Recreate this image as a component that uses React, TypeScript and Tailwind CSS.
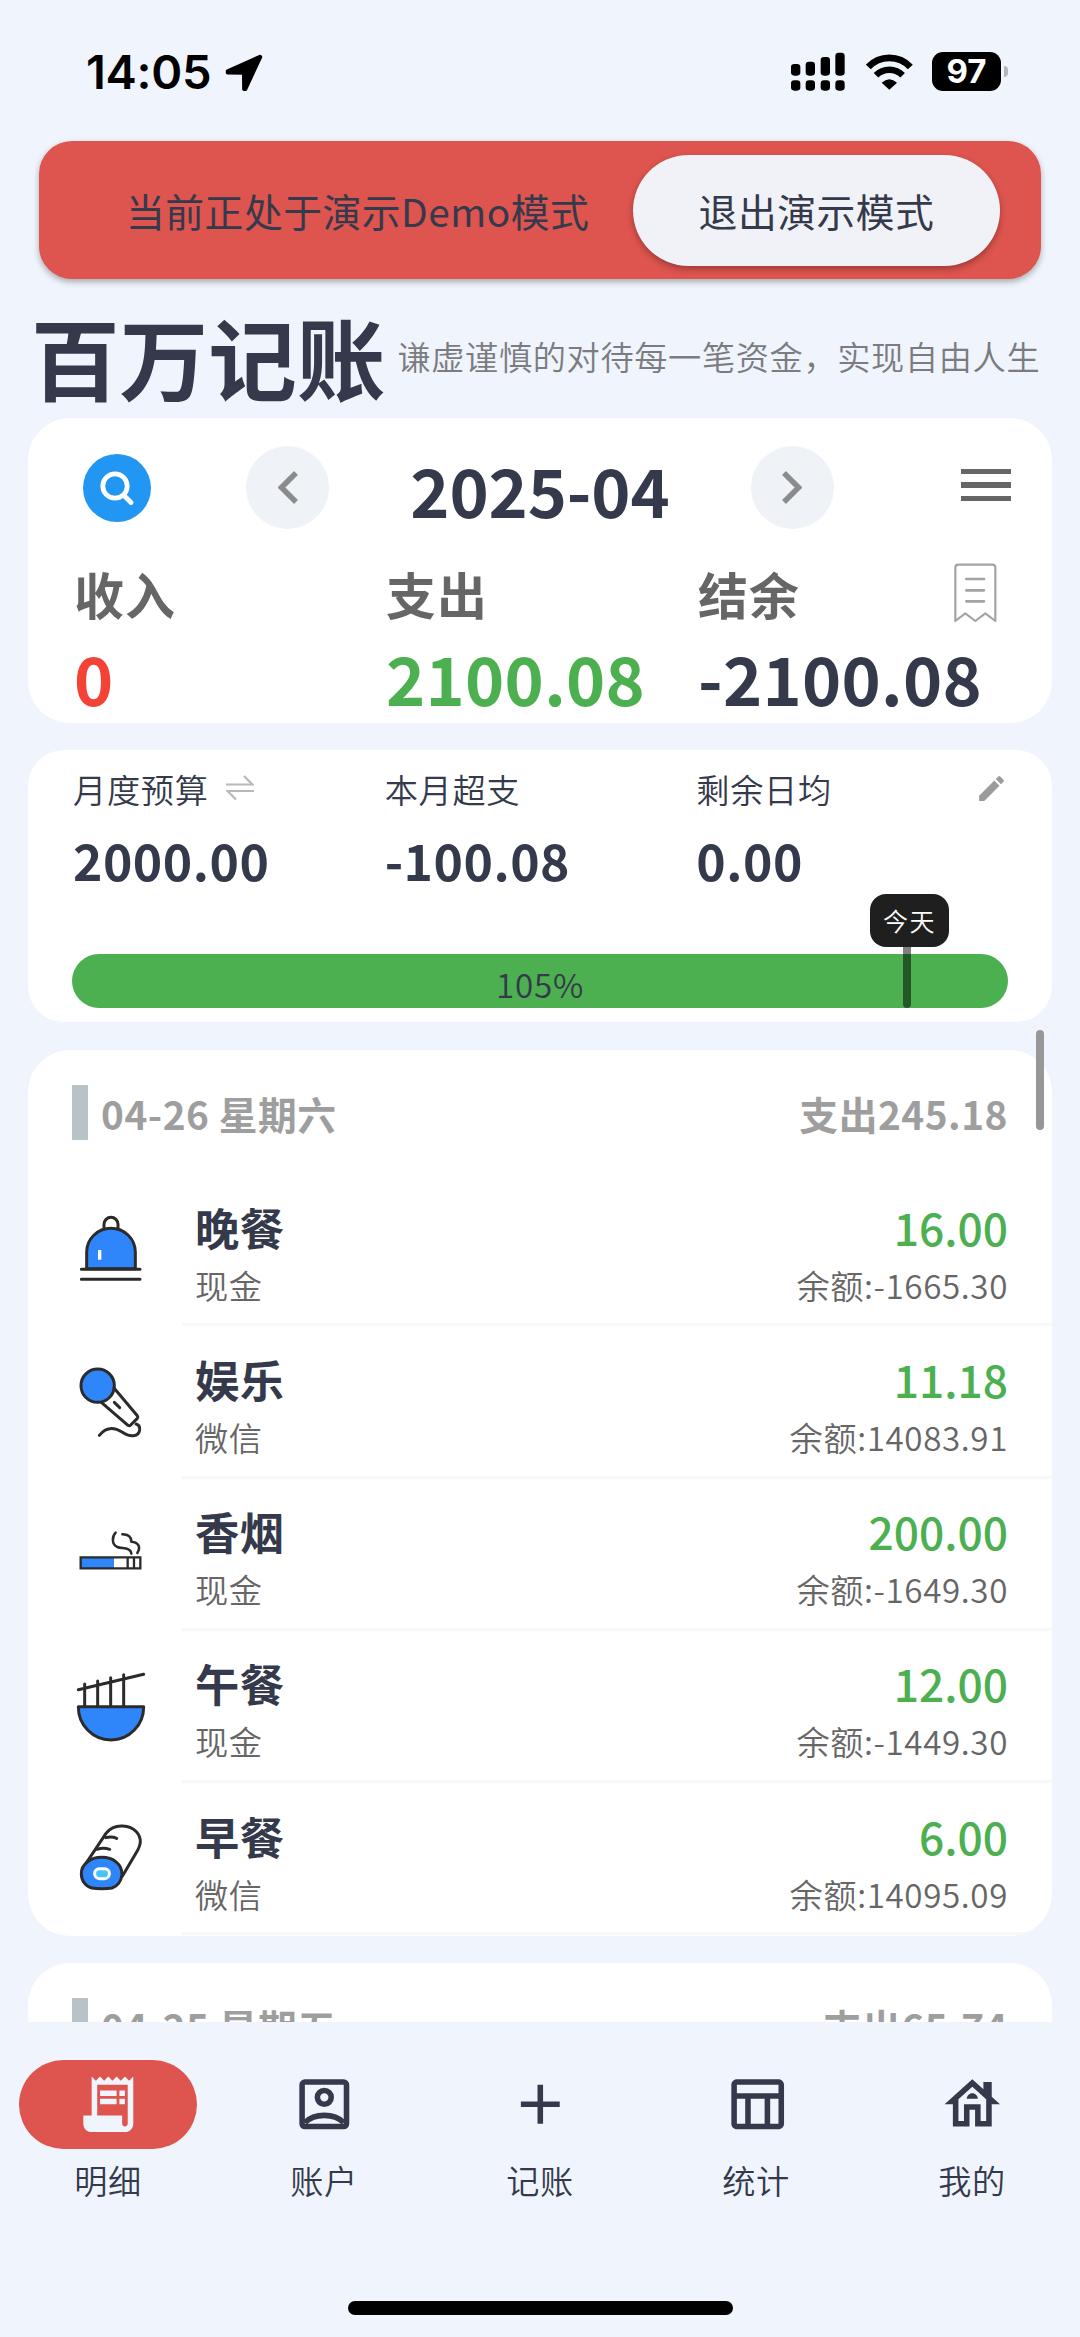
import React, { FC, ReactNode } from "react";
import clsx from "clsx";

interface RecordProps {
  title: string;
  account: string;
  amount: string;
  balance: string;
  icon: ReactNode;
}

interface DayHeaderProps {
  date: string;
  total: string;
}

interface NavItemProps {
  label: string;
  icon: ReactNode;
  active?: boolean;
}

const INK = "#2b2b2b";
const BLUE = "#2f86fb";

const LineIcon: FC<{ children: ReactNode }> = ({ children }) => (
  <svg
    className="size-[76px]"
    viewBox="0 0 228 228"
    fill="none"
    stroke={INK}
    strokeWidth="9"
    strokeLinecap="round"
    strokeLinejoin="round"
  >
    {children}
  </svg>
);

const DinnerIcon = () => (
  <LineIcon>
    <path d="M96 50V37a21 21 0 0 1 42 0v13" />
    <path d="M44 170v-50a73 71 0 0 1 146 0v50z" fill={BLUE} />
    <path d="M28 172h176M28 202h176" />
    <path d="M83 114v29" stroke="#fff" strokeWidth="10" strokeLinecap="butt" />
  </LineIcon>
);

const MicIcon = () => (
  <LineIcon>
    <circle cx="77" cy="65" r="50" fill={BLUE} />
    <path d="M126 72l70 83q3 4 0 8l-20 20q-4 4-8 1L88 115" />
    <path d="M127 115l16 16" />
    <path d="M82 214c18-22 40-28 68-10 26 18 50 14 53-6 1-10-3-16-11-18" />
  </LineIcon>
);

const SmokeIcon = () => (
  <LineIcon>
    <path d="M26 121h100v33H26z" fill={BLUE} stroke="none" />
    <path d="M26 121h179v33H26zM167 121v33M186 121v33" strokeWidth="7" strokeLinejoin="miter" />
    <path d="M131 47c-11 11-13 35 5 43 14 6 40 0 42 20" strokeWidth="7.500" />
    <path d="M151 52c19 0 27 8 27 22 22 2 29 16 18 34" strokeWidth="7.500" />
  </LineIcon>
);

const NoodleIcon = () => (
  <LineIcon>
    <path d="M19 62L215 16M38 45v68M77 36v77M116 26v87M155 17v96" />
    <path d="M19 113h196c0 54-42 100-98 100S19 167 19 113z" fill={BLUE} />
  </LineIcon>
);

const RollIcon = () => (
  <LineIcon>
    <path d="M44 124l58-87c14-18 34-23 50-22 38 2 54 27 53 49-1 10-4 16-8 24l-46 78" />
    <path
      d="M89 109c36 0 61 21 61 51-2 20-14 36-30 41-14 3-46 3-60 0-18-3-32-21-32-43 0-28 27-49 61-49z"
      fill={BLUE}
    />
    <path d="M101 50c11-3 22-3 33 2M75 85c12-4 26-4 38 0" />
    <rect x="68" y="143" width="44" height="30" rx="14" fill="#45c5f5" stroke="#fff" />
  </LineIcon>
);

const records: RecordProps[] = [
  { title: "晚餐", account: "现金", amount: "16.00", balance: "-1665.30", icon: <DinnerIcon /> },
  { title: "娱乐", account: "微信", amount: "11.18", balance: "14083.91", icon: <MicIcon /> },
  { title: "香烟", account: "现金", amount: "200.00", balance: "-1649.30", icon: <SmokeIcon /> },
  { title: "午餐", account: "现金", amount: "12.00", balance: "-1449.30", icon: <NoodleIcon /> },
  { title: "早餐", account: "微信", amount: "6.00", balance: "14095.09", icon: <RollIcon /> },
];

const StatusBar = () => (
  <div className="flex h-[141px] items-center pr-[72px] pl-[86px]">
    <span className="pt-[3px] font-[Inter] text-[47px] font-semibold tracking-[-0.3px] text-black">
      14:05
    </span>
    <svg className="mt-[3px] ml-[14px] h-[37px] w-[38px]" viewBox="0 0 38 37">
      <path
        d="M35 2.500L2.500 17.200v1.600l16.200.2.2 16.200h1.600L35.500 3z"
        stroke="#000"
        strokeWidth="3.500"
        strokeLinejoin="round"
      />
    </svg>
    <svg className="mt-[2px] ml-auto h-[39px] w-[54px]" viewBox="0 0 162 117">
      <rect x="0" y="36" width="28" height="35" rx="10" />
      <rect x="44" y="29" width="28" height="42" rx="10" />
      <rect x="89" y="15" width="28" height="56" rx="10" />
      <rect x="133" y="2" width="28" height="69" rx="10" />
      <rect x="0" y="85" width="28" height="31" rx="10" />
      <rect x="44" y="85" width="28" height="31" rx="10" />
      <rect x="89" y="85" width="28" height="31" rx="10" />
      <rect x="133" y="85" width="28" height="31" rx="10" />
    </svg>
    <svg className="mt-[2px] ml-[21px] h-[36px] w-[47px]" viewBox="0 0 141 108" fill="none">
      <path d="M7 39a86 86 0 0 1 126 0" stroke="#000" strokeWidth="20" />
      <path d="M30 64a56 56 0 0 1 80 0" stroke="#000" strokeWidth="19" />
      <path d="M47 86q23-21 46 0l-23 21z" fill="#000" />
    </svg>
    <div className="mt-[2px] ml-[19px] flex h-[39px] w-[69px] items-center justify-center rounded-[11px] bg-black font-[Inter] text-[33px] font-bold text-white">
      97
    </div>
    <div className="mt-[2px] ml-[3px] h-[11px] w-[4px] rounded-r-full bg-[#b4b6ba]" />
  </div>
);

const DemoBanner = () => (
  <div className="mx-[39px] flex h-[138px] items-center rounded-[33px] bg-[#de544e] pr-[41px] pl-[87px] text-[38.800px] shadow-[0_3px_6px_rgba(0,0,0,0.3)]">
    <span className="tracking-[0.500px]">当前正处于演示Demo模式</span>
    <button className="ml-auto h-[111px] w-[367px] rounded-full bg-[#f0f2f7] tracking-[0.500px] shadow-[0_3px_6px_rgba(0,0,0,0.3)]">
      退出演示模式
    </button>
  </div>
);

const Chevron: FC<{ flip?: boolean }> = ({ flip }) => (
  <button className="flex size-[83px] items-center justify-center rounded-full bg-[#eff3f8]">
    <svg
      className={clsx("h-[33px] w-[20px]", flip && "rotate-180")}
      viewBox="0 0 20 33"
      fill="none"
      stroke="#8a8b8d"
      strokeWidth="5.500"
    >
      <path d="M18 2L3.500 16.500 18 31" />
    </svg>
  </button>
);

const MonthCard = () => (
  <section className="h-[305px] rounded-[42px] bg-white pt-[28px] pr-[42px] pl-[46px]">
    <div className="flex h-[83px] items-center pl-[9px]">
      <button className="flex size-[68px] items-center justify-center rounded-full bg-[#2196f3]">
        <svg
          className="size-[34px]"
          viewBox="0 0 34 34"
          fill="none"
          stroke="#fff"
          strokeWidth="4.800"
          strokeLinecap="round"
        >
          <circle cx="15" cy="15" r="12.200" />
          <path d="M24 24.500l7 7" />
        </svg>
      </button>
      <div className="ml-[95px] flex w-[588px] items-center justify-between">
        <Chevron />
        <h2 className="pt-[3px] text-[66.500px] leading-[83px] font-bold tracking-[-0.100px]">2025-04</h2>
        <Chevron flip />
      </div>
      <div className="mr-[-1px] mb-[5px] ml-auto flex w-[50px] flex-col gap-[8.500px]">
        <span className="h-[5.300px] bg-[#666]" />
        <span className="h-[5.300px] bg-[#666]" />
        <span className="h-[5.300px] bg-[#666]" />
      </div>
    </div>
    <div className="mt-[22px] grid h-[84px] grid-cols-3 items-center text-[49.900px] font-bold tracking-[1.200px] text-[#666]">
      <span>收入</span>
      <span>支出</span>
      <div className="flex items-center justify-between pr-[13px]">
        <span>结余</span>
        <svg
          className="h-[60px] w-[43px]"
          viewBox="0 0 129 180"
          fill="none"
          stroke="#a3a3a3"
          strokeWidth="6.500"
          strokeLinejoin="round"
          strokeLinecap="round"
        >
          <path d="M4 174V14q0-9 9-9h102q9 0 9 9v160l-30-23-30 23-30-23z" />
          <path d="M37 48h53M37 82h53M37 115h53" strokeWidth="8" />
        </svg>
      </div>
    </div>
    <div className="grid h-[84px] grid-cols-3 items-center text-[66.500px] leading-[84px] font-bold tracking-[0.300px]">
      <span className="text-[#f44336]">0</span>
      <span className="text-[#4caf50]">2100.08</span>
      <span>-2100.08</span>
    </div>
  </section>
);

const BudgetCard = () => (
  <section className="mt-[27px] h-[272px] rounded-[36px] bg-white px-[44px] pt-[14px]">
    <div className="grid h-[49px] grid-cols-3 items-center pl-px text-[33.200px] font-[350] tracking-[0.700px]">
      <div className="flex items-center">
        月度预算
        <svg
          className="mb-[2px] ml-[17px] h-[26px] w-[28px]"
          viewBox="0 0 28 26"
          fill="none"
          stroke="#b8b8b8"
          strokeWidth="2.200"
        >
          <path d="M0 9.500h26.500L18 1M28 16H1.500l8.500 8.500" />
        </svg>
      </div>
      <span>本月超支</span>
      <div className="flex items-center justify-between">
        剩余日均
        <svg className="size-[33px]" viewBox="0 0 24 24" fill="#9b9b9b">
          <path d="M3 17.250V21h3.750L17.810 9.940l-3.750-3.750L3 17.250zM20.710 7.040a1 1 0 0 0 0-1.410l-2.340-2.340a1 1 0 0 0-1.410 0l-1.830 1.830 3.750 3.750 1.830-1.830z" />
        </svg>
      </div>
    </div>
    <div className="mt-[21px] grid h-[50px] grid-cols-3 items-center pl-px text-[49.900px] leading-[50px] font-bold tracking-[0.500px]">
      <span>2000.00</span>
      <span>-100.08</span>
      <span>0.00</span>
    </div>
    <div className="relative mt-[70px] flex h-[54px] items-center justify-center rounded-full bg-[#4caf50] text-[33.200px] font-[350] tracking-[0.800px]">
      <span className="pt-[5px]">105%</span>
      <div className="absolute bottom-0 left-[798px] flex w-[79px] flex-col items-center">
        <span className="flex h-[53px] w-full items-center justify-center rounded-[16px] bg-[#1f1f1f] text-[25px] tracking-[1.500px] text-white">
          今天
        </span>
        <span className="mr-[6px] h-[61px] w-[8px] rounded-b-full bg-black/50" />
      </div>
    </div>
  </section>
);

const DayHeader: FC<DayHeaderProps> = ({ date, total }) => (
  <div className="flex h-[124px] items-center px-[44px] text-[38.800px] font-bold tracking-[0.500px] text-[#9e9e9e]">
    <span className="h-[55px] w-[16px] bg-[#b8c3c8]" />
    <span className="ml-[13px] pt-[2px]">{date}</span>
    <span className="ml-auto pt-[2px]">支出{total}</span>
  </div>
);

const RecordRow: FC<RecordProps> = ({ title, account, amount, balance, icon }) => (
  <div className="flex h-[152.300px] pl-[44px]">
    <div className="mt-[38px] w-[110px]">{icon}</div>
    <div className="flex flex-1 justify-between border-b-[3px] border-[#f7f8fa] pt-[24.500px] pr-[44px] pl-[13px]">
      <div>
        <p className="text-[44.300px] leading-[57px] font-bold tracking-[0.500px]">{title}</p>
        <p className="text-[33.200px] leading-[58px] font-[350] tracking-[0.500px] text-[#666]">{account}</p>
      </div>
      <div className="text-right">
        <p className="text-[44.300px] leading-[57px] font-medium text-[#4caf50]">{amount}</p>
        <p className="text-[33.200px] leading-[58px] font-[350] tracking-[0.600px] text-[#666]">余额:{balance}</p>
      </div>
    </div>
  </div>
);

const NavItem: FC<NavItemProps> = ({ label, icon, active }) => (
  <div className="flex w-[216px] flex-col items-center">
    <div
      className={clsx(
        "flex h-[89px] w-[178px] items-center justify-center rounded-full",
        active ? "bg-[#de544e] text-[#f0f4fc]" : "text-[#343a4b]"
      )}
    >
      <svg className="size-[66.600px]" viewBox="0 0 24 24" fill="currentColor">
        {icon}
      </svg>
    </div>
    <span className="mt-[7px] text-[33.200px] leading-[48px] font-[350] tracking-[0.600px]">{label}</span>
  </div>
);

const BottomNav = () => (
  <nav className="flex h-[279px] pt-[38px]">
    <NavItem
      active
      label="明细"
      icon={
        <>
          <path d="M19.500 3.500L18 2l-1.500 1.500L15 2l-1.500 1.500L12 2l-1.500 1.500L9 2 7.500 3.500 6 2v14H3v3c0 1.660 1.340 3 3 3h12c1.660 0 3-1.340 3-3V2l-1.500 1.500zM19 19c0 .55-.45 1-1 1s-1-.45-1-1v-3H8V5h11v14z" />
          <path d="M9 7h6v2H9zM16 7h2v2h-2zM9 10h6v2H9zM16 10h2v2h-2z" />
        </>
      }
    />
    <NavItem
      label="账户"
      icon={
        <g fill="none" stroke="currentColor" strokeWidth="2">
          <rect x="4" y="4" width="16" height="16" rx="1" />
          <circle cx="12" cy="9.500" r="2.500" />
          <path d="M5 18.600c3.500-3.470 10.500-3.470 14 0" />
        </g>
      }
    />
    <NavItem label="记账" icon={<path d="M19 13h-6v6h-2v-6H5v-2h6V5h2v6h6v2z" />} />
    <NavItem
      label="统计"
      icon={
        <path d="M20 3H5c-1.100 0-2 .9-2 2v14c0 1.100.9 2 2 2h15c1.100 0 2-.9 2-2V5c0-1.100-.9-2-2-2zm0 2v3H5V5h15zm-5 14h-5v-9h5v9zM5 10h3v9H5v-9zm12 9v-9h3v9h-3z" />
      }
    />
    <NavItem
      label="我的"
      icon={
        <>
          <path d="M19 9.300V4h-3v2.600L12 3 2 12h3v8h6v-6h2v6h6v-8h3l-3-2.700zM17 18h-2v-6H9v6H7v-7.810l5-4.500 5 4.500V18z" />
          <path d="M10 10h4c0-1.100-.9-2-2-2s-2 .9-2 2z" />
        </>
      }
    />
  </nav>
);

export default function App() {
  return (
    <div className="relative flex h-[2337px] w-[1080px] flex-col overflow-hidden bg-[#f0f4fc] font-['Noto_Sans_CJK_SC',sans-serif] whitespace-nowrap text-[#343a4b]">
      <StatusBar />
      <DemoBanner />
      <header className="flex h-[139px] items-center pt-[14px] pl-[31px]">
        <h1 className="text-[88.600px] leading-[100px] font-bold">百万记账</h1>
        <p className="ml-[12px] text-[33.200px] font-[350] tracking-[0.650px] text-[#7a7c80]">
          谦虚谨慎的对待每一笔资金，实现自由人生
        </p>
      </header>
      <main className="h-[1604px] overflow-hidden px-[28px]">
        <MonthCard />
        <BudgetCard />
        <section className="mt-[28px] h-[886px] overflow-hidden rounded-[42px] bg-white">
          <DayHeader date="04-26 星期六" total="245.18" />
          {records.map((record) => (
            <RecordRow key={record.title} {...record} />
          ))}
        </section>
        <section className="mt-[27px] rounded-t-[42px] bg-white">
          <DayHeader date="04-25 星期五" total="65.74" />
        </section>
      </main>
      <BottomNav />
      <div className="mx-auto h-[14px] w-[385px] rounded-full bg-black" />
      {/* scroll thumb */}
      <div className="absolute top-[1030px] right-[36px] h-[100px] w-[8px] rounded-full bg-[#979797]" />
    </div>
  );
}
